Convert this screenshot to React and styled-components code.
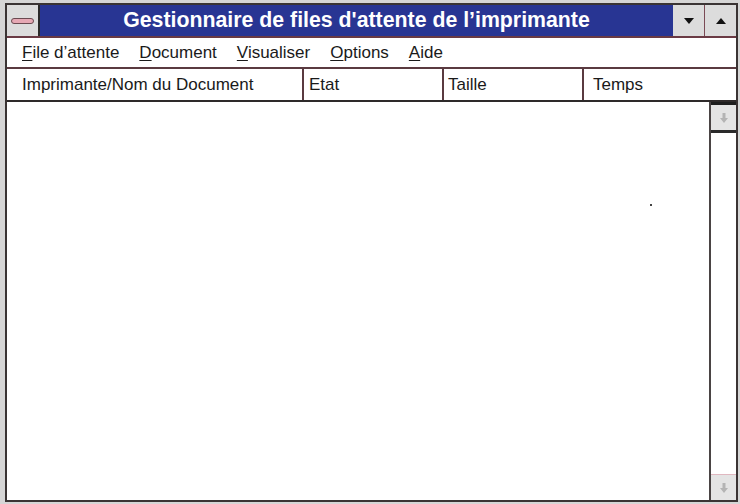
import React from "react";
import styled, { createGlobalStyle } from "styled-components";

const Global = createGlobalStyle`
  html, body { margin: 0; padding: 0; }
  body { background: #d6d6d6; font-family: "Liberation Sans", Arial, sans-serif; }
`;

const Screen = styled.div`
  width: 740px;
  height: 504px;
  box-sizing: border-box;
  padding: 3px 2px 2px 5px;
  background: #d6d6d6;
  display: flex;
`;

const Window = styled.div`
  flex: 1;
  display: flex;
  flex-direction: column;
  border: 2px solid #3a3434;
  background: #fff;
  min-height: 0;
`;

const TitleBar = styled.div`
  height: 31px;
  display: flex;
  border-bottom: 2px solid #6a3a44;
`;

const SysButton = styled.div`
  width: 31px;
  background: #dcdcdc;
  border-right: 2px solid #2a2a2a;
  display: flex;
  align-items: center;
  justify-content: center;
`;

const SysBar = styled.div`
  width: 21px;
  height: 4px;
  border: 1px solid #6a4a50;
  border-radius: 3px;
  background: #e6a8b4;
`;

const Caption = styled.div`
  flex: 1;
  background: #283593;
  color: #fff;
  font-weight: bold;
  font-size: 21.3px;
  display: flex;
  align-items: center;
  justify-content: center;
`;

const CapButton = styled.div`
  width: 31px;
  background: #dcdcdc;
  border-left: ${(p) => (p.$edge ? "1px solid #7a4a55" : "none")};
  display: flex;
  align-items: center;
  justify-content: center;
`;

const MenuBar = styled.div`
  height: 29px;
  display: flex;
  align-items: center;
  gap: 20px;
  padding-left: 15px;
  font-size: 17px;
  color: #1a1a1a;
  border-bottom: 2px solid #5a3a40;
`;

const MenuItem = styled.span`
  u { text-decoration: underline; text-underline-offset: 2px; }
`;

const HeaderRow = styled.div`
  height: 31px;
  display: grid;
  grid-template-columns: 295px 140px 140px 1fr;
  border-bottom: 2px solid #2e2a2a;
  font-size: 17px;
  color: #1a1a1a;
`;

const HeaderCell = styled.div`
  display: flex;
  align-items: center;
  padding-left: ${(p) => p.$pad}px;
  border-left: ${(p) => (p.$first ? "none" : "2px solid #5a3a40")};
`;

const Body = styled.div`
  flex: 1;
  display: flex;
  min-height: 0;
`;

const ListArea = styled.div`
  flex: 1;
  position: relative;
`;

const Speck = styled.div`
  position: absolute;
  left: 643px;
  top: 102px;
  width: 2px;
  height: 2px;
  background: #444;
`;

const ScrollBar = styled.div`
  width: 25px;
  border-left: 2px solid #4a4444;
  display: flex;
  flex-direction: column;
  justify-content: space-between;
`;

const ScrollArrow = styled.div`
  height: 25px;
  background: #e4e4e4;
  border-top: ${(p) => (p.$top ? "3px solid #1e1e1e" : "1px solid #e0b8c0")};
  border-bottom: ${(p) => (p.$top ? "3px solid #2a2a2a" : "none")};
  display: flex;
  align-items: center;
  justify-content: center;
`;

const Tri = ({ up }) => (
  <svg width="10" height="6" viewBox="0 0 10 6">
    <path d={up ? "M0 6 L5 0 L10 6 Z" : "M0 0 L10 0 L5 6 Z"} fill="#111" />
  </svg>
);

const FaintArrow = () => (
  <svg width="10" height="12" viewBox="0 0 10 12">
    <path d="M5 11 L9 6 L6.5 6 L6.5 1 L3.5 1 L3.5 6 L1 6 Z" fill="#b4b4b4" />
  </svg>
);

export default function App() {
  return (
    <>
      <Global />
      <Screen>
        <Window>
          <TitleBar>
            <SysButton>
              <SysBar />
            </SysButton>
            <Caption>Gestionnaire de files d'attente de l’imprimante</Caption>
            <CapButton>
              <Tri />
            </CapButton>
            <CapButton $edge>
              <Tri up />
            </CapButton>
          </TitleBar>
          <MenuBar>
            <MenuItem><u>F</u>ile d’attente</MenuItem>
            <MenuItem><u>D</u>ocument</MenuItem>
            <MenuItem><u>V</u>isualiser</MenuItem>
            <MenuItem><u>O</u>ptions</MenuItem>
            <MenuItem><u>A</u>ide</MenuItem>
          </MenuBar>
          <HeaderRow>
            <HeaderCell $first $pad={15}>Imprimante/Nom du Document</HeaderCell>
            <HeaderCell $pad={5}>Etat</HeaderCell>
            <HeaderCell $pad={4}>Taille</HeaderCell>
            <HeaderCell $pad={9}>Temps</HeaderCell>
          </HeaderRow>
          <Body>
            <ListArea>
              <Speck />
            </ListArea>
            <ScrollBar>
              <ScrollArrow $top>
                <FaintArrow />
              </ScrollArrow>
              <ScrollArrow>
                <FaintArrow />
              </ScrollArrow>
            </ScrollBar>
          </Body>
        </Window>
      </Screen>
    </>
  );
}
